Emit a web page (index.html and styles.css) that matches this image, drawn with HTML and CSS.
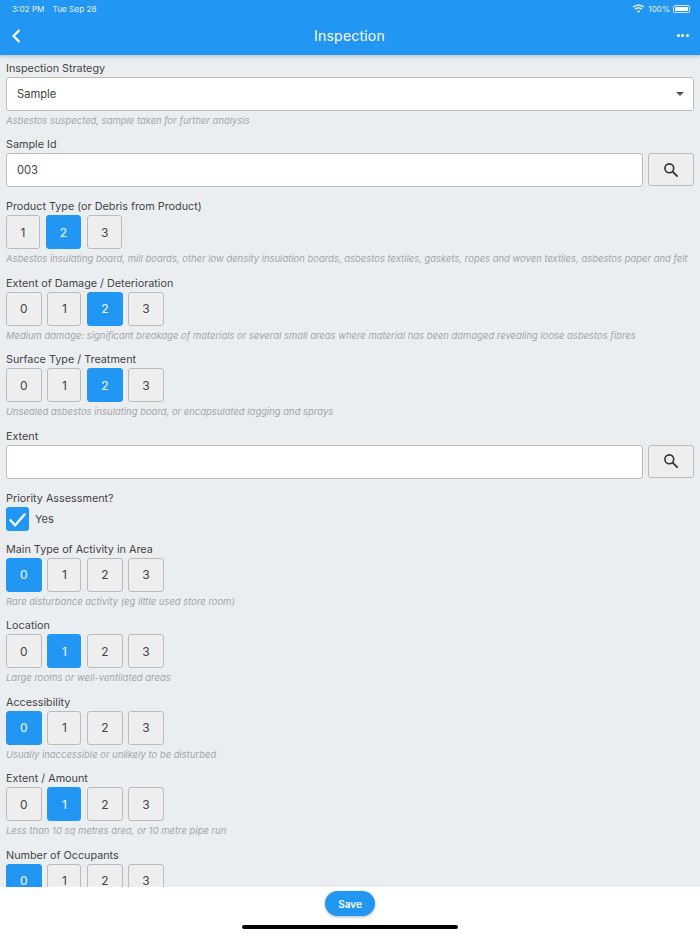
FILE: index.html
```html
<!DOCTYPE html>
<html lang="en">
<head>
  <meta charset="UTF-8">
  <meta name="viewport" content="width=device-width, initial-scale=1.0">
  <title>Inspection</title>
  <link rel="stylesheet" href="styles.css">
</head>
<body>
  <div class="app">
    <header class="app-header">
      <div class="status-bar">
        <span class="status-time">3:02 PM</span>
        <span class="status-date">Tue Sep 28</span>
        <span class="status-right">
          <svg class="wifi" width="13" height="10" viewBox="0 0 13 10"><path d="M6.5 1.8c1.9 0 3.6.7 4.9 1.9l.9-1A8.4 8.4 0 0 0 6.5.4 8.4 8.4 0 0 0 .7 2.7l.9 1a7.100 7.100 0 0 1 4.900-1.900z" fill="#fff"/><path d="M6.500 4.600c1.100 0 2.100.4 2.900 1.100l.9-1a5.600 5.600 0 0 0-7.600 0l.9 1c.8-.7 1.800-1.100 2.900-1.100z" fill="#fff"/><path d="M6.500 6.500c-.6 0-1.200.2-1.600.6l1.600 1.800 1.600-1.800c-.4-.4-1-.6-1.600-.6z" fill="#fff"/></svg>
          <span>100%</span>
          <span class="battery"><span class="battery-fill"></span></span>
        </span>
      </div>
      <div class="nav-bar">
        <svg class="back" width="12" height="16" viewBox="0 0 12 16"><path d="M9.500 2 3.500 8l6 6" fill="none" stroke="#fff" stroke-width="2.200"/></svg>
        <h1 class="nav-title">Inspection</h1>
        <span class="more"><i></i><i></i><i></i></span>
      </div>
    </header>

    <main class="content">
      <div class="field">
        <label class="field-label">Inspection Strategy</label>
        <div class="input select">
          <span>Sample</span>
          <span class="caret"></span>
        </div>
        <p class="hint">Asbestos suspected, sample taken for further analysis</p>
      </div>

      <div class="field">
        <label class="field-label">Sample Id</label>
        <div class="input-row">
          <div class="input">003</div>
          <button class="search-btn">
            <svg width="16" height="16" viewBox="0 0 16 16"><circle cx="6.300" cy="6.300" r="4.400" fill="none" stroke="#333" stroke-width="1.600"/><path d="m9.600 9.600 5 5" stroke="#333" stroke-width="1.800"/></svg>
          </button>
        </div>
      </div>

      <div class="field">
        <label class="field-label">Product Type (or Debris from Product)</label>
        <div class="options">
          <button class="option">1</button>
          <button class="option selected">2</button>
          <button class="option">3</button>
        </div>
        <p class="hint">Asbestos insulating board, mill boards, other low density insulation boards, asbestos textiles, gaskets, ropes and woven textiles, asbestos paper and felt</p>
      </div>

      <div class="field">
        <label class="field-label">Extent of Damage / Deterioration</label>
        <div class="options">
          <button class="option">0</button>
          <button class="option">1</button>
          <button class="option selected">2</button>
          <button class="option">3</button>
        </div>
        <p class="hint">Medium damage: significant breakage of materials or several small areas where material has been damaged revealing loose asbestos fibres</p>
      </div>

      <div class="field">
        <label class="field-label">Surface Type / Treatment</label>
        <div class="options">
          <button class="option">0</button>
          <button class="option">1</button>
          <button class="option selected">2</button>
          <button class="option">3</button>
        </div>
        <p class="hint">Unsealed asbestos insulating board, or encapsulated lagging and sprays</p>
      </div>

      <div class="field">
        <label class="field-label">Extent</label>
        <div class="input-row">
          <div class="input"></div>
          <button class="search-btn">
            <svg width="16" height="16" viewBox="0 0 16 16"><circle cx="6.300" cy="6.300" r="4.400" fill="none" stroke="#333" stroke-width="1.600"/><path d="m9.600 9.600 5 5" stroke="#333" stroke-width="1.800"/></svg>
          </button>
        </div>
      </div>

      <div class="field">
        <label class="field-label">Priority Assessment?</label>
        <div class="check-row">
          <span class="checkbox">
            <svg width="24" height="24" viewBox="0 0 24 24"><path d="m4 12.500 5.500 6L20 6.500" fill="none" stroke="#fff" stroke-width="2.400"/></svg>
          </span>
          <span>Yes</span>
        </div>
      </div>

      <div class="field">
        <label class="field-label">Main Type of Activity in Area</label>
        <div class="options">
          <button class="option selected">0</button>
          <button class="option">1</button>
          <button class="option">2</button>
          <button class="option">3</button>
        </div>
        <p class="hint">Rare disturbance activity (eg little used store room)</p>
      </div>

      <div class="field">
        <label class="field-label">Location</label>
        <div class="options">
          <button class="option">0</button>
          <button class="option selected">1</button>
          <button class="option">2</button>
          <button class="option">3</button>
        </div>
        <p class="hint">Large rooms or well-ventilated areas</p>
      </div>

      <div class="field">
        <label class="field-label">Accessibility</label>
        <div class="options">
          <button class="option selected">0</button>
          <button class="option">1</button>
          <button class="option">2</button>
          <button class="option">3</button>
        </div>
        <p class="hint">Usually inaccessible or unlikely to be disturbed</p>
      </div>

      <div class="field">
        <label class="field-label">Extent / Amount</label>
        <div class="options">
          <button class="option">0</button>
          <button class="option selected">1</button>
          <button class="option">2</button>
          <button class="option">3</button>
        </div>
        <p class="hint">Less than 10 sq metres area, or 10 metre pipe run</p>
      </div>

      <div class="field">
        <label class="field-label">Number of Occupants</label>
        <div class="options">
          <button class="option selected">0</button>
          <button class="option">1</button>
          <button class="option">2</button>
          <button class="option">3</button>
        </div>
      </div>
    </main>

    <footer class="app-footer">
      <button class="save-btn">Save</button>
      <div class="home-bar"></div>
    </footer>
  </div>
</body>
</html>
```

FILE: styles.css
```css
* {
  box-sizing: border-box;
}

body {
  margin: 0;
  font-family: Inter, "Liberation Sans", sans-serif;
  color: #444;
  background-color: #ebeef1;
}

.app {
  display: flex;
  flex-direction: column;
  height: 934px;
  overflow: hidden;
}

.app-header {
  height: 55px;
  flex-shrink: 0;
  background-color: #2196f3;
  color: #fff;
  box-shadow: 0 1px 4px rgba(0, 0, 0, 0.25);
  position: relative;
  z-index: 1;
}

.status-bar {
  display: flex;
  align-items: center;
  height: 17px;
  padding: 0 10px 0 12px;
  font-size: 8.200px;
  color: #e3f1fd;
}

.status-date {
  margin-left: 8px;
}

.status-right {
  display: flex;
  align-items: center;
  gap: 3px;
  margin-left: auto;
}

.battery {
  display: flex;
  width: 17px;
  height: 8px;
  padding: 1px;
  border: 1px solid #cde6fb;
  border-radius: 2px;
}

.battery-fill {
  flex: 1;
  background-color: #fff;
}

.nav-bar {
  display: flex;
  align-items: center;
  justify-content: space-between;
  height: 37px;
  padding: 0 10px;
}

.nav-title {
  margin: 0;
  font-size: 14px;
  font-weight: 400;
  letter-spacing: 0.2px;
}

.more {
  display: flex;
  gap: 1.500px;
  padding-right: 1px;
}

.more i {
  width: 3px;
  height: 3px;
  border-radius: 50%;
  background-color: #fff;
}

.content {
  flex: 1;
  min-height: 0;
  overflow: hidden;
  padding: 5.500px 6px 0;
}

.field {
  margin-bottom: 10.500px;
}

.field-label {
  display: block;
  height: 16px;
  font-size: 10.800px;
  line-height: 16px;
}

.input {
  flex: 1;
  height: 34px;
  padding: 0 10px;
  font-size: 11.200px;
  line-height: 32px;
  background-color: #fff;
  border: 1px solid #bbb;
  border-radius: 3px;
}

.select {
  display: flex;
  align-items: center;
  justify-content: space-between;
  padding-right: 9px;
}

.caret {
  width: 0;
  height: 0;
  border-left: 4px solid transparent;
  border-right: 4px solid transparent;
  border-top: 4px solid #555;
}

.input-row {
  display: flex;
  gap: 5px;
  margin-bottom: 12px;
}

.search-btn {
  display: flex;
  align-items: center;
  justify-content: center;
  width: 46px;
  height: 33px;
  padding: 0;
  background-color: #eee;
  border: 1px solid #bbb;
  border-radius: 3px;
}

.options {
  display: flex;
  gap: 5.800px;
}

.option {
  min-width: 34px;
  height: 34px;
  padding: 0 13px;
  font-family: inherit;
  font-size: 12px;
  color: #444;
  background-color: #eee;
  border: 1px solid #bbb;
  border-radius: 3px;
}

.option.selected {
  color: #fff;
  background-color: #2196f3;
  border-color: #2196f3;
}

.hint {
  margin: 3.500px 0 0;
  padding-top: 0.500px;
  font-size: 9.450px;
  line-height: 12px;
  font-style: italic;
  color: #a2a5a8;
}

.check-row {
  display: flex;
  align-items: center;
  gap: 6px;
  margin-bottom: 11px;
  font-size: 11px;
}

.checkbox {
  display: flex;
  width: 23px;
  height: 24px;
  background-color: #2196f3;
  border-radius: 3px;
}

.app-footer {
  display: flex;
  flex-direction: column;
  align-items: center;
  height: 47px;
  flex-shrink: 0;
  padding-top: 4px;
  background-color: #fff;
}

.save-btn {
  width: 50px;
  height: 25px;
  padding: 0;
  font-family: inherit;
  font-size: 10px;
  font-weight: 600;
  color: #fff;
  background-color: #2196f3;
  border: 0;
  border-radius: 13px;
  box-shadow: 0 1px 3px rgba(0, 0, 0, 0.3);
}

.home-bar {
  width: 216px;
  height: 4px;
  margin-top: 9px;
  background-color: #000;
  border-radius: 2px;
}
```
